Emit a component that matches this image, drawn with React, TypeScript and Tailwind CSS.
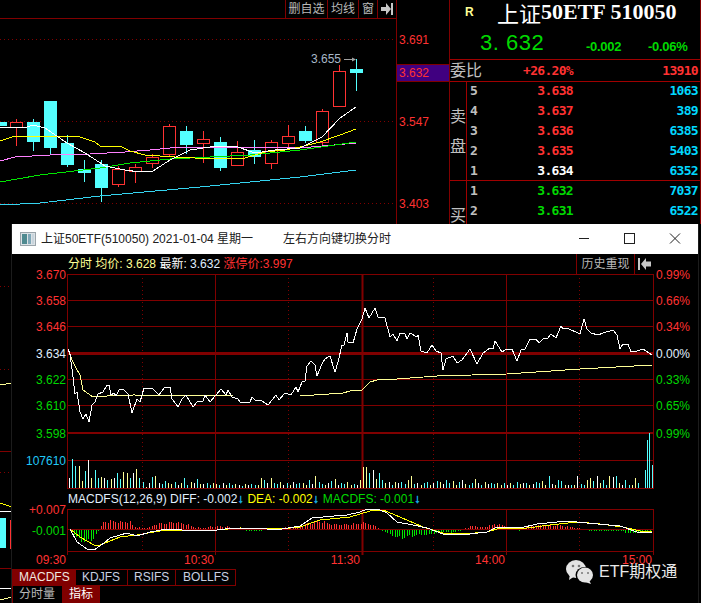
import React from 'react';

type Candle = [number, number, number, number, number, 'r' | 'c'];
type Pt = [number, number];

const RED = '#ff3232';
const CYAN = '#54ffff';
const GRID = '#800000';

// x, body top, body bottom, wick top, wick bottom
const candles: Candle[] = [
  [0, 122, 125, 122, 125, 'c'],
  [16, 122, 127, 119, 146, 'r'],
  [33, 122, 141, 119, 151, 'c'],
  [50, 101, 147, 101, 154, 'c'],
  [67, 143, 164, 135, 167, 'c'],
  [84, 169, 172, 160, 182, 'c'],
  [101, 164, 187, 160, 202, 'c'],
  [118, 169, 184, 166, 187, 'r'],
  [135, 167, 171, 164, 183, 'r'],
  [152, 157, 163, 154, 168, 'r'],
  [169, 126, 154, 124, 157, 'r'],
  [186, 131, 144, 126, 154, 'c'],
  [203, 139, 143, 131, 163, 'r'],
  [220, 142, 167, 137, 171, 'c'],
  [237, 152, 165, 141, 165, 'r'],
  [254, 150, 156, 140, 164, 'c'],
  [271, 142, 163, 140, 169, 'r'],
  [288, 136, 143, 125, 149, 'r'],
  [305, 131, 140, 126, 143, 'c'],
  [322, 111, 142, 109, 146, 'r'],
  [339, 71, 106, 65, 106, 'r'],
  [356, 69, 72, 59, 91, 'c'],
];

const ma: [string, Pt[]][] = [
  ['#35d4f0', [[0, 205], [40, 203], [100, 196], [200, 187], [300, 177], [356, 170]]],
  ['#ff80ff', [[0, 161], [15, 157], [50, 155], [90, 154], [125, 152], [150, 150], [180, 147], [250, 147], [300, 148], [356, 143]]],
  ['#00e600', [[0, 182], [40, 175], [100, 168], [130, 163], [170, 159], [250, 155], [300, 150], [356, 142]]],
  ['#ffff00', [[0, 141], [15, 136], [60, 136], [80, 137], [95, 142], [100, 146], [120, 146], [130, 151], [145, 155], [175, 157], [215, 159], [245, 158], [265, 152], [285, 150], [300, 147], [320, 142], [340, 135], [356, 129]]],
  ['#ffffff', [[0, 127], [24, 128], [33, 125], [45, 128], [67, 143], [85, 153], [105, 166], [125, 170], [140, 172], [153, 171], [170, 160], [190, 150], [210, 147], [235, 146], [255, 153], [275, 150], [300, 148], [322, 137], [340, 118], [356, 107]]],
];

const price: Pt[] = [
  [68, 349], [70, 354], [72, 369], [75, 394], [77, 392], [80, 412], [83, 419], [86, 414], [89, 422], [92, 405], [95, 402], [98, 394], [103, 392], [107, 385], [109, 385], [111, 395], [114, 393], [116, 396], [119, 390], [123, 389], [128, 394], [132, 413], [137, 399], [140, 402], [144, 388], [153, 389], [159, 395], [164, 388], [170, 387], [172, 399], [178, 407], [182, 399], [186, 395], [193, 407], [197, 402], [203, 401], [205, 395], [210, 402], [221, 389], [226, 395], [228, 390], [232, 397], [238, 399], [240, 402], [250, 402], [252, 397], [255, 400], [262, 401], [268, 405], [276, 395], [279, 400], [285, 393], [291, 395], [296, 387], [298, 392], [302, 382], [305, 381], [307, 366], [311, 361], [315, 365], [317, 376], [322, 364], [325, 359], [330, 356], [335, 372], [338, 362], [342, 345], [344, 345], [347, 333], [348, 342], [350, 342], [353, 343], [357, 329], [362, 319], [365, 308], [369, 318], [375, 308], [378, 317], [385, 318], [390, 337], [393, 334], [397, 341], [400, 333], [405, 334], [407, 339], [410, 333], [417, 337], [418, 335], [421, 351], [427, 353], [432, 345], [436, 351], [441, 353], [443, 370], [446, 359], [453, 356], [457, 363], [462, 360], [470, 349], [477, 364], [483, 353], [490, 348], [493, 349], [495, 341], [502, 352], [507, 349], [512, 349], [517, 361], [521, 350], [525, 349], [530, 339], [536, 339], [539, 343], [544, 338], [547, 339], [551, 334], [556, 338], [561, 326], [563, 329], [567, 328], [580, 334], [584, 319], [587, 329], [591, 333], [598, 335], [603, 333], [613, 330], [617, 335], [620, 349], [623, 344], [628, 344], [631, 352], [637, 351], [643, 349], [652, 355],
];

const avg: Pt[] = [
  [68, 349], [72, 360], [76, 368], [80, 375], [83, 390], [93, 397], [107, 396], [133, 395], [233, 396], [300, 396], [343, 393], [350, 391], [362, 390], [370, 382], [377, 380], [397, 379], [437, 376], [507, 374], [580, 369], [652, 365],
];

const macdWhite: Pt[] = [
  [70, 529], [77, 542], [87, 549], [94, 550], [104, 543], [110, 538], [127, 533], [137, 536], [150, 532], [167, 529], [177, 529], [187, 531], [217, 530], [234, 528], [267, 529], [282, 529], [300, 526], [312, 518], [334, 516], [347, 515], [360, 512], [367, 509], [380, 510], [387, 513], [397, 522], [413, 525], [427, 528], [443, 534], [453, 535], [470, 534], [487, 532], [497, 527], [520, 528], [537, 524], [567, 521], [587, 523], [620, 526], [637, 532], [652, 533],
];

const macdYellow: Pt[] = [
  [70, 529], [80, 537], [94, 545], [100, 545], [120, 537], [137, 535], [154, 532], [167, 530], [184, 530], [217, 530], [240, 528], [280, 529], [300, 527], [320, 520], [350, 517], [360, 514], [370, 511], [383, 510], [400, 517], [423, 527], [443, 533], [463, 534], [487, 532], [500, 528], [527, 528], [550, 525], [577, 522], [600, 524], [623, 527], [640, 531], [652, 532],
];

// histogram envelope, up is red and down is green
const macdEnv: Pt[] = [
  [68, 0], [72, -3], [76, -8], [80, -12], [85, -13], [90, -12], [93, -10], [97, -3], [99, -1], [100, 2], [103, 8], [110, 9], [125, 8], [128, 9], [130, 8], [133, 3], [135, 2], [145, 1], [150, 2], [155, 5], [165, 7], [175, 8], [185, 6], [190, 4], [195, 2], [205, 1], [210, 3], [225, 3], [240, 0], [250, -1], [260, -1], [270, 0], [277, 1], [290, 2], [300, 4], [310, 7], [320, 9], [333, 5], [350, 5], [362, 7], [370, 6], [378, 1], [382, -1], [390, -5], [397, -9], [403, -9], [410, -7], [420, -5], [425, -6], [433, -4], [440, -3], [445, -2], [450, -3], [455, -2], [460, -1], [465, 1], [473, 4], [480, 2], [485, 3], [490, 4], [495, 6], [500, 5], [505, 3], [510, 1], [515, 0], [520, -1], [527, 3], [540, 4], [560, 4], [573, 2], [580, 1], [590, -1], [620, -1], [630, -4], [640, -3], [652, -2],
];

const volA = [10, 29, 22, 22, 7, 17, 28, 10, 18, 10, 11, 10, 8, 9, 10, 15, 9, 16, 15, 10, 15, 19, 10, 6, 1, 5, 11, 12, 5, 4, 7, 5, 4, 6, 3, 5, 10, 3, 6, 5, 9, 4, 4, 5, 3, 5, 4, 3, 5, 3, 5, 3, 4, 3, 2, 4, 3, 4, 3, 3, 10, 8, 5, 10, 5, 4, 6, 3, 5, 3, 6, 4, 5, 5, 3, 8, 4, 12, 6, 4, 3, 5, 7, 9, 3, 5, 4, 6, 3, 4, 3, 8];
const volB = [21, 21, 15, 18, 9, 15, 8, 5, 6, 3, 6, 5, 6, 4, 8, 12, 4, 5, 3, 5, 6, 3, 5, 7, 6, 4, 8, 5, 7, 3, 6, 8, 4, 3, 5, 9, 5, 3, 6, 4, 5, 4, 5, 3, 5, 3, 5, 3, 6, 4, 5, 5, 3, 4, 6, 5, 7, 3, 12, 4, 3, 8, 7, 3, 3, 3, 3, 12, 4, 3, 8, 10, 7, 12, 5, 8, 3, 12, 11, 12, 5, 3, 8, 3, 3, 10, 5];
const volColors = ['#ffffff', CYAN, CYAN, '#ffff96', '#ffff96', CYAN, '#ffffff', '#ffff96', CYAN, CYAN, '#ffff96', '#ffffff', CYAN, '#ffff96'];

const pts = (p: Pt[]) => p.map(([x, y]) => `${x},${y}`).join(' ');

function envAt(x: number) {
  for (let i = 1; i < macdEnv.length; i++) {
    const [x0, y0] = macdEnv[i - 1];
    const [x1, y1] = macdEnv[i];
    if (x <= x1) return y0 + ((y1 - y0) * (x - x0)) / (x1 - x0);
  }
  return 0;
}

function Line({ points, color }: { points: Pt[]; color: string }) {
  return <polyline points={pts(points)} fill="none" stroke={color} strokeWidth="1" shapeRendering="crispEdges" />;
}

function BackChart() {
  return (
    <svg width="449" height="584" viewBox="0 19 449 584" className="block text-[12px]">
      {[39, 121, 203, 286, 369, 472].map((y) => (
        <line key={y} x1="0" x2="396" y1={y + 0.5} y2={y + 0.5} stroke={GRID} strokeDasharray="1 3" />
      ))}
      <line x1="0" x2="12" y1="451.5" y2="451.5" stroke={GRID} />
      <line x1="0" x2="12" y1="568.5" y2="568.5" stroke={GRID} />
      <line x1="396.5" x2="396.5" y1="19" y2="224" stroke={GRID} />
      {candles.map(([x, top, bottom, wt, wb, kind]) => {
        const color = kind === 'r' ? RED : CYAN;
        const cx = x + 0.5;
        return (
          <g key={x}>
            <line x1={cx} x2={cx} y1={wt} y2={wb} stroke={color} />
            <rect
              x={x - 6 + 0.5}
              y={top + 0.5}
              width="12"
              height={bottom - top}
              fill={kind === 'r' ? '#000000' : CYAN}
              stroke={color}
            />
          </g>
        );
      })}
      {ma.map(([color, p]) => (
        <Line key={color} points={p} color={color} />
      ))}
      <polyline points="0,384 6,384 12,383" fill="none" stroke="#ffff96" shapeRendering="crispEdges" />
      <polyline points="0,503 6,505 12,507" fill="none" stroke="#ffff00" shapeRendering="crispEdges" />
      <line x1="0" x2="12" y1="511.5" y2="511.5" stroke="#ffffff" />
      <rect x="0" y="518" width="6" height="30" fill={CYAN} />
      <rect x="10.5" y="520.5" width="4" height="28" fill="none" stroke={RED} />
      <line x1="0" x2="12" y1="588.5" y2="588.5" stroke="#ffffff" />
      <polyline points="0,600 12,597" fill="none" stroke="#ffff96" shapeRendering="crispEdges" />

      <text x="311" y="63" fill="#a8b8c8">3.655</text>
      <line x1="344" x2="354" y1="59.5" y2="59.5" stroke="#a0a0a0" />
      <path d="M352 57.5 L356 59.5 L352 61.5 Z" fill="#a0a0a0" />
      <text x="399" y="44" fill={RED}>3.691</text>
      <text x="399" y="126" fill={RED}>3.547</text>
      <text x="399" y="208" fill={RED}>3.403</text>
      <rect x="397" y="64" width="52" height="17" fill="#400080" />
      <line x1="397" x2="449" y1="64.5" y2="64.5" stroke={GRID} />
      <line x1="397" x2="449" y1="81.5" y2="81.5" stroke={GRID} />
      <text x="399" y="77" fill={RED}>3.632</text>
    </svg>
  );
}

function OrderRow({ n, p, q, color }: { n: number; p: string; q: string; color: string }) {
  return (
    <div className="flex h-5 items-center font-['DejaVu_Sans_Mono',monospace] text-[13px] font-bold tracking-[-0.7px]">
      <span className="w-[9px] text-[#c0c0c0]">{n}</span>
      <span className={`w-[94px] text-right ${color}`}>{p}</span>
      <span className="w-[125px] text-right text-[#00d8ff]">{q}</span>
    </div>
  );
}

function OrderPanel() {
  return (
    <div className="h-[224px] w-[252px] overflow-hidden border-x border-x-[#800000]">
      <div className="relative h-[59px]">
        <span className="absolute left-[15px] top-[3px] text-[12px] font-bold text-[#ffff96]">R</span>
        <div className="absolute left-[47px] top-0 flex h-[24px] items-center whitespace-pre font-['Liberation_Serif',serif] text-[22px] font-bold leading-none text-white">
          <span className="font-['Noto_Sans_CJK_SC',sans-serif] font-normal">上证</span>
          <span>50ETF 510050</span>
        </div>
        <span className="absolute left-[30px] top-[29px] whitespace-pre text-[22px] leading-[28px] tracking-[0.5px] text-[#00d800]">3. 632</span>
        <span className="absolute left-[136px] top-[37px] text-[13px] font-bold tracking-[-0.3px] text-[#00d800]">-0.002</span>
        <span className="absolute left-[198px] top-[37px] text-[13px] font-bold tracking-[-0.3px] text-[#00d800]">-0.06%</span>
      </div>
      <div className="flex h-[23px] items-center border-y border-y-[#a00000] pr-[1px]">
        <span className="w-[34px] text-[16px] leading-none text-[#c0c0c0]">委比</span>
        <span className="w-[89px] text-right font-['DejaVu_Sans_Mono',monospace] text-[13px] font-bold tracking-[-0.7px] text-[#ff3232]">+26.20%</span>
        <span className="w-[125px] text-right font-['DejaVu_Sans_Mono',monospace] text-[13px] font-bold tracking-[-0.7px] text-[#ff3232]">13910</span>
      </div>
      <div className="flex h-[99px] border-b border-b-[#a00000]">
        <div className="flex w-[17px] flex-col items-center justify-center gap-[14px] border-r border-r-[#a00000] pt-[2px] text-[16px] leading-none text-[#c0c0c0]">
          <span>卖</span>
          <span>盘</span>
        </div>
        <div className="-mt-[1px] pl-[3px]">
          <OrderRow n={5} p="3.638" q="1063" color="text-[#ff3232]" />
          <OrderRow n={4} p="3.637" q="389" color="text-[#ff3232]" />
          <OrderRow n={3} p="3.636" q="6385" color="text-[#ff3232]" />
          <OrderRow n={2} p="3.635" q="5403" color="text-[#ff3232]" />
          <OrderRow n={1} p="3.634" q="6352" color="text-white" />
        </div>
      </div>
      <div className="flex h-[44px]">
        <div className="flex w-[17px] flex-col items-center border-r border-r-[#a00000] pt-[27px] text-[16px] leading-none text-[#c0c0c0]">
          <span>买</span>
        </div>
        <div className="pl-[3px]">
          <OrderRow n={1} p="3.632" q="7037" color="text-[#00d800]" />
          <OrderRow n={2} p="3.631" q="6522" color="text-[#00d800]" />
        </div>
      </div>
    </div>
  );
}

function IntradayChart() {
  const hLines = [274, 300, 326, 379, 405, 460, 488, 509, 529, 551];
  const solidV = [215, 506];
  const dottedV = [142, 288, 433, 579];
  const macdBars: { x: number; v: number }[] = [];
  for (let i = 0; i < 240; i++) {
    const x = 69 + i * 2.43;
    const v = envAt(x) * (0.72 + (((i * 7) % 4) / 3) * 0.28);
    if (Math.abs(v) >= 0.6) macdBars.push({ x: Math.round(x), v });
  }
  return (
    <svg width="686" height="301" viewBox="12 268 686 301" className="-mt-[6px] block text-[12px]">
      {hLines.map((y) => (
        <line key={y} x1="67" x2="654" y1={y + 0.5} y2={y + 0.5} stroke={GRID} />
      ))}
      <rect x="67" y="352" width="587" height="3" fill={GRID} />
      <rect x="67" y="432" width="587" height="2" fill={GRID} />
      {[...solidV, 362].map((x) => (
        <g key={x}>
          <line x1={x + 0.5} x2={x + 0.5} y1="274" y2="489" stroke={GRID} strokeWidth={x === 362 ? 2 : 1} />
          <line x1={x + 0.5} x2={x + 0.5} y1="509" y2="555" stroke={GRID} strokeWidth={x === 362 ? 2 : 1} />
        </g>
      ))}
      {dottedV.map((x) => (
        <g key={x}>
          <line x1={x + 0.5} x2={x + 0.5} y1="274" y2="489" stroke={GRID} strokeDasharray="1 3" />
          <line x1={x + 0.5} x2={x + 0.5} y1="509" y2="551" stroke={GRID} strokeDasharray="1 3" />
        </g>
      ))}
      <line x1="67.5" x2="67.5" y1="274" y2="489" stroke={GRID} />
      <line x1="67.5" x2="67.5" y1="509" y2="555" stroke={GRID} />
      <line x1="653.5" x2="653.5" y1="274" y2="489" stroke={GRID} />
      <line x1="653.5" x2="653.5" y1="509" y2="555" stroke={GRID} />

      <Line points={avg} color="#ffff96" />
      <Line points={price} color="#ffffff" />

      {volA.map((h, i) => (
        <rect key={i} x={Math.round(69 + i * 3.2)} y={488 - h} width="1" height={h} fill={volColors[i % 14]} />
      ))}
      {volB.map((h, i) => (
        <rect key={i} x={Math.round(363 + i * 3.2)} y={488 - h} width="1" height={h} fill={volColors[(i + 3) % 14]} />
      ))}
      <rect x="645" y="470" width="1" height="18" fill={CYAN} />
      <rect x="647" y="440" width="1" height="48" fill={CYAN} />
      <rect x="649" y="433" width="1" height="55" fill={CYAN} />
      <rect x="652" y="465" width="1" height="23" fill={CYAN} />

      {macdBars.map(({ x, v }, i) => (
        <rect
          key={i}
          x={x}
          y={v > 0 ? 529 - v : 530}
          width="1"
          height={Math.abs(v)}
          fill={v > 0 ? RED : '#00e600'}
          shapeRendering="crispEdges"
        />
      ))}
      <Line points={macdYellow} color="#ffff00" />
      <Line points={macdWhite} color="#ffffff" />

      <text x="68" y="503" className="whitespace-pre">
        <tspan fill="#e0f0ff">MACDFS(12,26,9) DIFF: -0.002</tspan>
        <tspan fill="#18a8e0" stroke="#18a8e0" strokeWidth="0.5">↓</tspan>
        <tspan fill="#ffff00" dx="4">DEA: -0.002</tspan>
        <tspan fill="#18a8e0" stroke="#18a8e0" strokeWidth="0.5">↓</tspan>
        <tspan fill="#00d800" dx="4">MACDFS: -0.001</tspan>
        <tspan fill="#18a8e0" stroke="#18a8e0" strokeWidth="0.5">↓</tspan>
      </text>

      <g textAnchor="end">
        <text x="66" y="279" fill={RED}>3.670</text>
        <text x="66" y="305" fill={RED}>3.658</text>
        <text x="66" y="331" fill={RED}>3.646</text>
        <text x="66" y="358" fill="#e0f0ff">3.634</text>
        <text x="66" y="384" fill="#00d800">3.622</text>
        <text x="66" y="410" fill="#00d800">3.610</text>
        <text x="66" y="438" fill="#00d800">3.598</text>
        <text x="66" y="465" fill="#20c8f8">107610</text>
        <text x="66" y="514" fill={RED}>+0.007</text>
        <text x="66" y="535" fill="#00d800">-0.001</text>
        <text x="66" y="564" fill={RED}>09:30</text>
        <text x="214" y="564" fill={RED}>10:30</text>
        <text x="360" y="564" fill={RED}>11:30</text>
        <text x="505" y="564" fill={RED}>14:00</text>
        <text x="652" y="564" fill={RED}>15:00</text>
      </g>
      <text x="656" y="279" fill={RED}>0.99%</text>
      <text x="656" y="305" fill={RED}>0.66%</text>
      <text x="656" y="331" fill={RED}>0.34%</text>
      <text x="656" y="358" fill="#e0f0ff">0.00%</text>
      <text x="656" y="384" fill="#00d800">0.33%</text>
      <text x="656" y="410" fill="#00d800">0.65%</text>
      <text x="656" y="438" fill="#00d800">0.99%</text>
    </svg>
  );
}

function WeChatMark() {
  return (
    <div className="absolute left-[554px] top-[335px] flex items-center gap-[5px]">
      <svg width="28" height="26" viewBox="0 0 28 26">
        <ellipse cx="10" cy="10" rx="10" ry="9" fill="#e4e4e4" />
        <path d="M4 15 L3 21 L9 17 Z" fill="#e4e4e4" />
        <ellipse cx="19" cy="16" rx="9.5" ry="8" fill="#000000" />
        <ellipse cx="19" cy="16" rx="8" ry="7.5" fill="#e4e4e4" />
        <path d="M23 21 L25 25 L19 23 Z" fill="#e4e4e4" />
        <circle cx="7" cy="7" r="1.3" fill="#777777" />
        <circle cx="13" cy="7" r="1.3" fill="#777777" />
        <circle cx="16" cy="14" r="1" fill="#777777" />
        <circle cx="22" cy="14" r="1" fill="#777777" />
      </svg>
      <span className="text-[16px] leading-none text-[#e8e8e8]">ETF期权通</span>
    </div>
  );
}

function MinuteWindow() {
  return (
    <div className="absolute left-[11px] top-[224px] h-[379px] w-[688px] border-x border-x-[#1c1c1c] bg-black">
      <div className="flex h-[30px] items-center bg-white pl-[8px] text-[12px] text-[#202020]">
        <svg width="16" height="14" viewBox="0 0 16 14" className="mr-[5px]">
          <rect x="0.5" y="0.5" width="15" height="13" fill="#dce2e6" stroke="#9aa4aa" />
          <rect x="2" y="2" width="5" height="10" fill="#4f8a90" />
          <rect x="8" y="2" width="3" height="10" fill="#7fa8b8" />
          <rect x="12" y="2" width="2" height="10" fill="#c8d4dc" />
        </svg>
        <span className="w-[242px] whitespace-nowrap">上证50ETF(510050) 2021-01-04 星期一</span>
        <span className="whitespace-nowrap">左右方向键切换分时</span>
        <svg width="102" height="12" viewBox="0 0 102 12" className="ml-[188px] text-[#202020]">
          <line x1="0" x2="10" y1="5.5" y2="5.5" stroke="currentColor" />
          <rect x="45.5" y="0.5" width="10" height="10" fill="none" stroke="currentColor" />
          <path d="M91 0.5 L101 10.5 M101 0.5 L91 10.5" stroke="currentColor" fill="none" />
        </svg>
      </div>
      <div className="flex h-[20px] items-center pl-[56px] pr-[45px] text-[12px] whitespace-pre">
        <span className="text-[#ffff96]">分时 均价: 3.628 </span>
        <span className="text-white">最新: </span>
        <span className="text-[#e0f0ff]">3.632 </span>
        <span className="text-[#ff3232]">涨停价:3.997</span>
        <span className="ml-auto flex h-[20px] w-[59px] items-center justify-center border-x border-x-[#800000] text-[#b8b8b8]">历史重现</span>
        <svg width="18" height="20" viewBox="0 0 18 20" className="shrink-0">
          <rect x="3" y="4" width="2" height="12" fill="#c8c8c8" />
          <path d="M6 10 L11 4 V7.5 H16 V12.5 H11 V16 Z" fill="#c8c8c8" />
        </svg>
      </div>
      <IntradayChart />
      <div className="flex h-[17px] w-[224px] border-y border-y-[#800000] border-r border-r-[#800000] text-[12px] leading-[15px] text-[#c8d0e0]">
        <span className="w-[64px] bg-[#800000] pl-[7px] text-[#f0e8e0]">MACDFS</span>
        <span className="w-[52px] border-r border-r-[#800000] pl-[6px]">KDJFS</span>
        <span className="w-[48px] border-r border-r-[#800000] pl-[6px]">RSIFS</span>
        <span className="pl-[7px]">BOLLFS</span>
      </div>
      <div className="flex h-[17px] w-[88px] bg-[#800000] text-[12px] leading-[17px]">
        <span className="ml-[1px] w-[49px] bg-black pl-[6px] text-[#b8b8b8]">分时量</span>
        <span className="pl-[7px] text-white">指标</span>
      </div>
      <WeChatMark />
    </div>
  );
}

export default function App() {
  return (
    <div className="relative flex h-[603px] w-[701px] overflow-hidden bg-black font-['Liberation_Sans','Noto_Sans_CJK_SC',sans-serif]">
      <div className="w-[449px] shrink-0">
        <div className="flex h-[19px] w-[397px] justify-end border-b border-b-[#800000] border-r border-r-[#800000] text-[12px] leading-[18px] text-[#b8b8b8]">
          <span className="w-[42px] border-l border-l-[#800000] text-center">删自选</span>
          <span className="w-[31px] border-l border-l-[#800000] text-center">均线</span>
          <span className="w-[19px] border-l border-l-[#800000] text-center">窗</span>
          <span className="flex w-[19px] items-center justify-center border-l border-l-[#800000]">
            <svg width="14" height="12" viewBox="0 0 14 12">
              <path d="M1 4 H6 V0 L11 6 L6 12 V8 H1 Z" fill="#c8c8c8" />
              <rect x="11" y="0" width="2" height="12" fill="#c8c8c8" />
            </svg>
          </span>
        </div>
        <BackChart />
      </div>
      <OrderPanel />
      <MinuteWindow />
    </div>
  );
}
